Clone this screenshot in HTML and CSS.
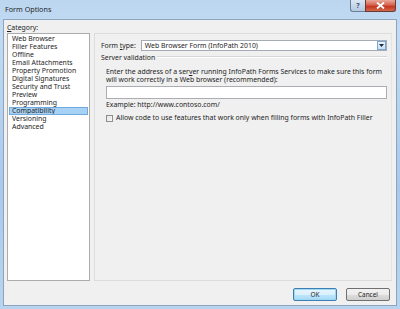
FILE: index.html
```html
<!DOCTYPE html>
<html>
<head>
<meta charset="utf-8">
<link rel="stylesheet" href="styles.css">
</head>
<body>
<div class="window">
  <div class="titlebar">
    <span class="title">Form Options</span>
    <div class="caption-btns">
      <span class="cbtn help">?</span>
      <span class="cbtn close">
        <svg width="9" height="7" viewBox="0 0 9 7"><path d="M1 0.5 L8 6.5 M8 0.5 L1 6.5" stroke="#fff" stroke-width="1.8"/></svg>
      </span>
    </div>
  </div>
  <div class="client">
    <div class="main">
      <div class="cat-col">
        <div class="label"><u>C</u>ategory:</div>
        <ul class="list">
          <li>Web Browser</li>
          <li>Filler Features</li>
          <li>Offline</li>
          <li>Email Attachments</li>
          <li>Property Promotion</li>
          <li>Digital Signatures</li>
          <li>Security and Trust</li>
          <li>Preview</li>
          <li>Programming</li>
          <li class="selected">Compatibility</li>
          <li>Versioning</li>
          <li>Advanced</li>
        </ul>
      </div>
      <div class="panel">
        <div class="row formtype">
          <span class="ft-label">Form <u>t</u>ype:</span>
          <div class="select">
            <span class="select-text">Web Browser Form (InfoPath 2010)</span>
            <span class="select-btn"><svg width="5" height="3" viewBox="0 0 5 3"><path d="M0 0 H5 L2.5 3 Z" fill="#1c2a3a"/></svg></span>
          </div>
        </div>
        <div class="group-head">
          <span>Server validation</span>
          <span class="rule"></span>
        </div>
        <div class="group-body">
          <p class="desc">Enter the address of a ser<u>v</u>er running InfoPath Forms Services to make sure this form<br>will work correctly in a Web browser (recommended):</p>
          <div class="input"></div>
          <div class="example">Example: http://www.contoso.com/</div>
          <label class="check"><span class="box"></span><span>Allow code to use features that work only when filling forms with InfoPath Filler</span></label>
        </div>
      </div>
    </div>
    <div class="buttons">
      <span class="btn default">OK</span>
      <span class="btn">Cancel</span>
    </div>
  </div>
</div>
</body>
</html>
```
FILE: styles.css
```css
html, body {
  margin: 0;
  padding: 0;
}
body {
  width: 400px;
  height: 309px;
  overflow: hidden;
  font-family: "Noto Sans", "Open Sans", sans-serif;
  font-size: 6.9px;
  color: #1e1e1e;
}
u { text-decoration: underline; }
.window {
  box-sizing: border-box;
  width: 400px;
  height: 309px;
  padding: 0 3px 3px 3px;
  background: linear-gradient(180deg, #bcd6f0 0%, #c3dbf3 10%, #a9c9ec 60%, #b9d4ef 100%);
  display: flex;
  flex-direction: column;
}
.titlebar {
  height: 19px;
  display: flex;
  align-items: flex-start;
  justify-content: space-between;
  flex: none;
}
.title {
  padding-left: 2px;
  padding-top: 4px;
  font-size: 7.2px;
  color: #1f1f1f;
}
.caption-btns {
  display: flex;
  margin-right: 1px;
}
.cbtn {
  height: 12px;
  display: flex;
  align-items: center;
  justify-content: center;
  border: 1px solid #6c7f96;
  border-top: none;
  box-sizing: border-box;
}
.help {
  width: 15px;
  border-radius: 0 0 0 3px;
  background: linear-gradient(180deg, #dbe7f4 0%, #c7d8eb 50%, #b4c9e1 100%);
  color: #3d4f66;
  font-size: 7px;
  font-weight: bold;
  border-right: none;
}
.close {
  width: 31px;
  border-radius: 0 0 3px 0;
  background: linear-gradient(180deg, #e9a99b 0%, #d5624e 45%, #c5361f 60%, #d26a4a 100%);
  border-color: #6b3a36;
}
.client {
  flex: 1;
  background: #f0f0f0;
  border: 1px solid #8ea4bd;
  display: flex;
  flex-direction: column;
  padding: 2px 4px 4px 3px;
}
.main {
  display: flex;
  gap: 4px;
  flex: 1;
}
.cat-col {
  width: 83px;
  display: flex;
  flex-direction: column;
}
.label {
  height: 11px;
  line-height: 11px;
}
.list {
  list-style: none;
  margin: 0;
  padding: 1px 1px;
  flex: 1;
  background: #fff;
  border: 1px solid #acacac;
}
.list li {
  height: 8px;
  line-height: 8px;
  padding-left: 3px;
  white-space: nowrap;
}
.list li.selected {
  background: #a8d2f5;
  outline: 1px solid #6fa9dd;
  outline-offset: -1px;
}
.panel {
  flex: 1;
  margin-top: 11px;
  border: 1px solid #dcdcdc;
  border-right-color: #e4e4e4;
  background: #f0f0f0;
  padding: 6px 4px 0 6px;
  box-sizing: border-box;
}
.formtype {
  display: flex;
  align-items: center;
  gap: 5px;
}
.ft-label {
  white-space: nowrap;
}
.select {
  flex: 1;
  height: 11px;
  box-sizing: border-box;
  background: #fff;
  border: 1px solid #a5acb5;
  display: flex;
  align-items: center;
  justify-content: space-between;
}
.select-text {
  padding-left: 3px;
}
.select-btn {
  width: 9px;
  height: 9px;
  box-sizing: border-box;
  border: 1px solid #7ea5cf;
  background: linear-gradient(180deg, #eaf4fc, #c6e0f7);
  display: flex;
  align-items: center;
  justify-content: center;
}
.group-head {
  display: flex;
  align-items: center;
  gap: 2px;
  margin-top: 1px;
  height: 10px;
}
.rule {
  flex: 1;
  height: 0;
  border-top: 1px solid #d5d5d5;
  border-bottom: 1px solid #fff;
}
.group-body {
  padding-left: 5px;
}
.desc {
  margin: 6px 0 0 0;
  line-height: 8px;
  white-space: nowrap;
}
.input {
  height: 11px;
  margin-top: 2px;
  background: #fff;
  border: 1px solid #abadb3;
}
.example {
  margin-top: 2px;
  line-height: 8px;
}
.check {
  display: flex;
  align-items: center;
  gap: 3px;
  margin-top: 5px;
  line-height: 8px;
  white-space: nowrap;
}
.box {
  width: 7px;
  height: 7px;
  box-sizing: border-box;
  border: 1px solid #8f8f8f;
  background: linear-gradient(135deg, #e4e4e4, #f8f8f8);
}
.buttons {
  display: flex;
  justify-content: flex-end;
  gap: 9px;
  padding-top: 7px;
  padding-right: 2px;
}
.btn {
  width: 44px;
  height: 13px;
  box-sizing: border-box;
  border: 1px solid #707070;
  border-radius: 2px;
  background: linear-gradient(180deg, #f2f2f2 0%, #ebebeb 50%, #dddddd 51%, #cfcfcf 100%);
  display: flex;
  align-items: center;
  justify-content: center;
  font-size: 6.4px;
}
.btn.default {
  border-color: #3c7fb1;
  background: linear-gradient(180deg, #eaf6fd 0%, #d9f0fc 50%, #bee6fd 51%, #a7d9f5 100%);
  box-shadow: inset 0 0 0 1px #9fd8f7;
}
```
